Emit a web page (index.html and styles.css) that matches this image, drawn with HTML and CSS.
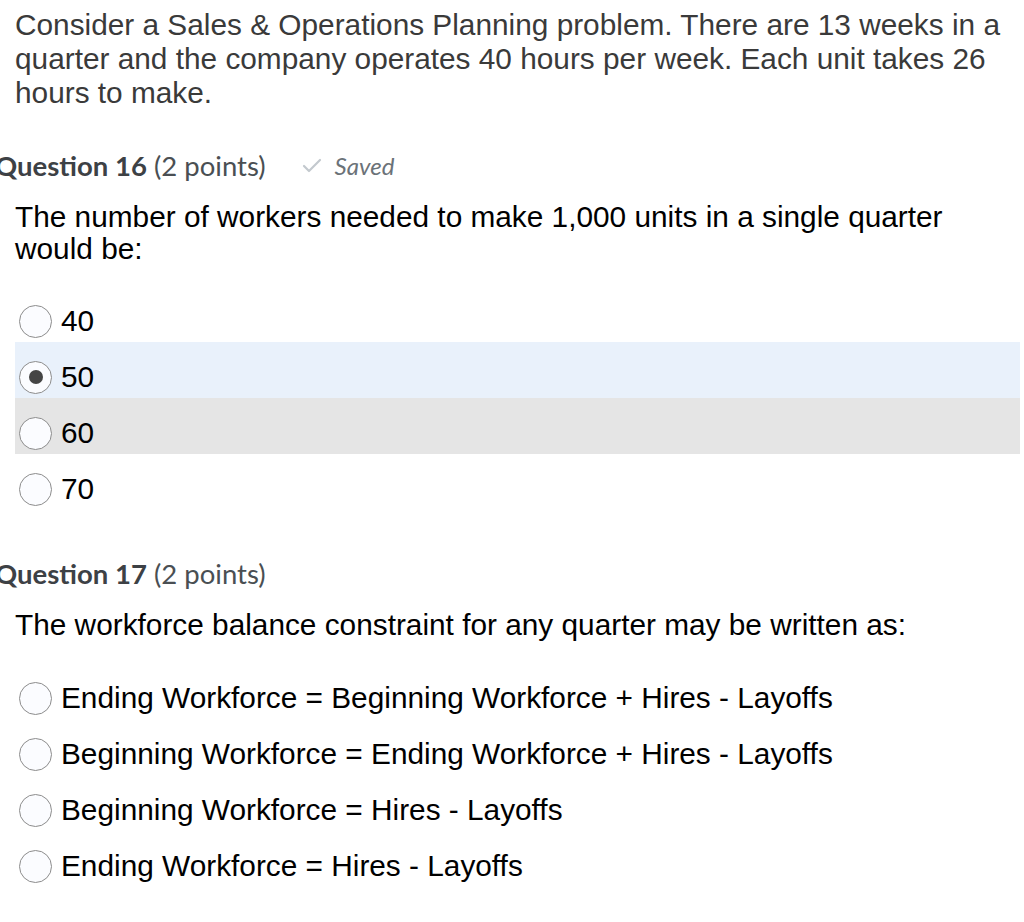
FILE: index.html
```html
<!DOCTYPE html>
<html>
<head>
<meta charset="utf-8">
<link rel="stylesheet" href="styles.css">
</head>
<body>
<div class="page">
  <p class="intro">Consider a Sales &amp; Operations Planning problem. There are 13 weeks in a quarter and the company operates 40 hours per week. Each unit takes 26 hours to make.</p>

  <section class="question q16">
    <div class="qhead">
      <span class="qtitle"><b>Question 16</b> (2 points)</span>
      <span class="saved">
        <svg class="check" width="20" height="15" viewBox="0 0 20 15"><path d="M2 8 L7 13 L18 2" fill="none" stroke="#c3c9ce" stroke-width="2.2" stroke-linecap="round" stroke-linejoin="round"/></svg>
        <i>Saved</i>
      </span>
    </div>
    <p class="qtext">The number of workers needed to make 1,000 units in a single quarter would be:</p>
    <div class="options">
      <label class="opt"><span class="radio"></span><span>40</span></label>
      <label class="opt selected"><span class="radio checked"></span><span>50</span></label>
      <label class="opt hover"><span class="radio"></span><span>60</span></label>
      <label class="opt"><span class="radio"></span><span>70</span></label>
    </div>
  </section>

  <section class="question q17">
    <div class="qhead">
      <span class="qtitle"><b>Question 17</b> (2 points)</span>
    </div>
    <p class="qtext">The workforce balance constraint for any quarter may be written as:</p>
    <div class="options">
      <label class="opt"><span class="radio"></span><span>Ending Workforce = Beginning Workforce + Hires - Layoffs</span></label>
      <label class="opt"><span class="radio"></span><span>Beginning Workforce = Ending Workforce + Hires - Layoffs</span></label>
      <label class="opt"><span class="radio"></span><span>Beginning Workforce = Hires - Layoffs</span></label>
      <label class="opt"><span class="radio"></span><span>Ending Workforce = Hires - Layoffs</span></label>
    </div>
  </section>
</div>
</body>
</html>
```

FILE: styles.css
```css
html, body {
  margin: 0;
  padding: 0;
  background: #ffffff;
}
body {
  font-family: "Liberation Sans", Arial, sans-serif;
  width: 1024px;
  height: 922px;
  overflow: hidden;
}
.page {
  padding: 8px 4px 0 15px;
  display: flex;
  flex-direction: column;
}
.intro {
  margin: 0;
  padding-right: 12px;
  font-size: 29.8px;
  line-height: 34px;
  color: #3a3a3a;
}
.question {
  display: flex;
  flex-direction: column;
}
.q16 { margin-top: 38px; }
.q17 { margin-top: 46px; }
.qhead {
  margin-left: -20px;
  height: 34px;
  display: flex;
  align-items: center;
  gap: 36px;
  font-family: Lato, "Open Sans", sans-serif;
  font-size: 27.5px;
  color: #4a4f53;
}
.qtitle b {
  font-weight: 700;
  color: #3d4145;
}
.saved {
  display: flex;
  align-items: center;
  gap: 13px;
  font-size: 24px;
  color: #6b7278;
}
.check { display: block; }
.qtext {
  margin: 19px 0 0 0;
  padding-right: 12px;
  font-size: 29.8px;
  line-height: 32px;
  color: #000;
}
.q16 .options { margin-top: 21px; }
.q17 .options { margin-top: 22px; }
.options {
  display: flex;
  flex-direction: column;
}
.opt {
  box-sizing: border-box;
  height: 56px;
  padding: 14px 0 0 4px;
  display: flex;
  align-items: center;
  gap: 9px;
  font-size: 29.8px;
  color: #000;
}
.opt.selected { background: #e9f1fb; }
.opt.hover { background: #e5e5e5; }
.radio {
  width: 31px;
  height: 31px;
  border: 1px solid #8c8c8c;
  border-radius: 50%;
  background: #fbfcff;
  box-sizing: content-box;
  display: flex;
  align-items: center;
  justify-content: center;
  flex: none;
}
.radio.checked::after {
  content: "";
  width: 14px;
  height: 14px;
  border-radius: 50%;
  background: #454545;
}
```
